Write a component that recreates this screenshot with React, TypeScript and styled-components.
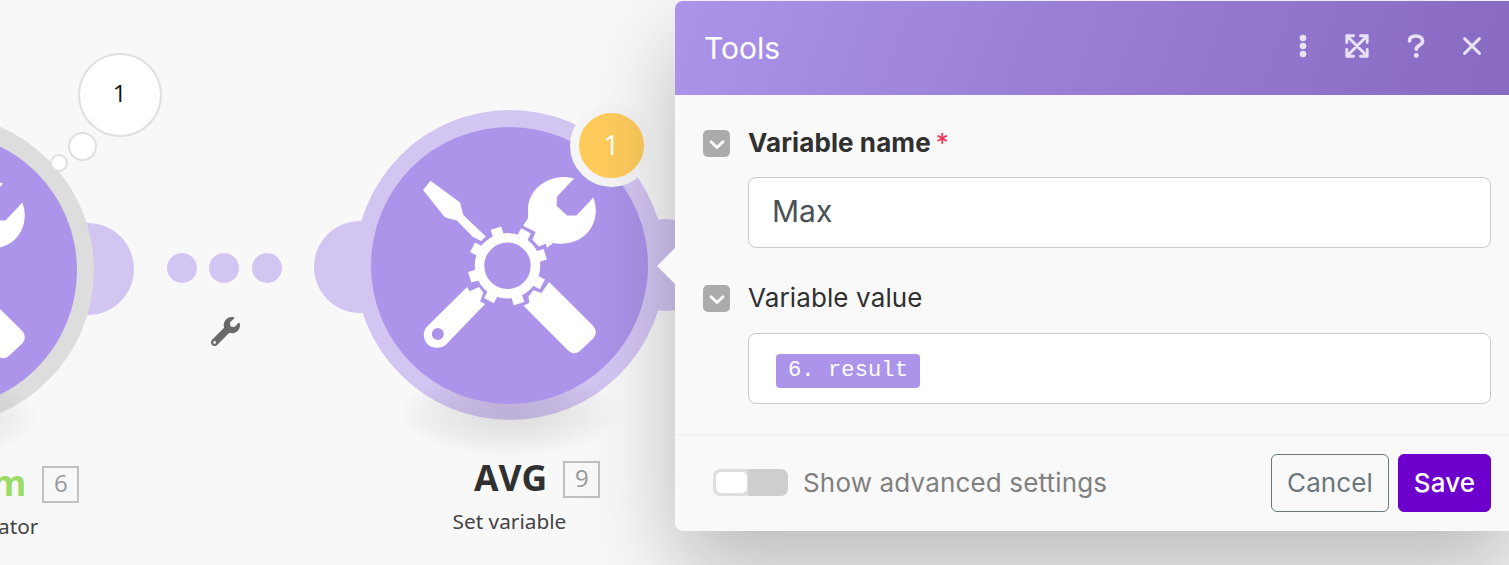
import React from "react";
import styled, { createGlobalStyle } from "styled-components";
import { FaWrench } from "react-icons/fa";

const GlobalStyle = createGlobalStyle`
  * { box-sizing: border-box; }
  body { margin: 0; background: #f8f8f8; overflow: hidden; }
  button, input { font: inherit; }
`;

const Canvas = styled.main`
  position: relative;
  width: 1509px;
  height: 565px;
  overflow: hidden;
  background: #f8f8f8;
  font-family: "Noto Sans", "Open Sans", sans-serif;
`;

type Spot = { $x: number; $y: number };

const Disc = styled.div<Spot & { $r: number; $fill: string; $line?: string }>`
  position: absolute;
  left: ${(p) => p.$x - p.$r}px;
  top: ${(p) => p.$y - p.$r}px;
  width: ${(p) => p.$r * 2}px;
  height: ${(p) => p.$r * 2}px;
  display: flex;
  align-items: center;
  justify-content: center;
  border-radius: 50%;
  background: ${(p) => p.$fill};
  border: ${(p) => p.$line ?? "none"};
`;

const GroundShadow = styled.div<Spot>`
  position: absolute;
  left: ${(p) => p.$x - 112}px;
  top: ${(p) => p.$y - 44}px;
  width: 224px;
  height: 88px;
  background: radial-gradient(closest-side, rgba(0, 0, 0, 0.11), rgba(0, 0, 0, 0.08) 40%, rgba(0, 0, 0, 0.03) 80%, rgba(0, 0, 0, 0));
`;

const BubbleText = styled.span`
  font-family: "Open Sans", sans-serif;
  font-size: 24px;
  line-height: 30px;
  color: #111;
  padding-bottom: 4px;
`;

const BadgeText = styled(BubbleText)`
  font-size: 28px;
  color: #fff;
  padding: 0 0 4px 1px;
`;

const LinkWrench = styled(FaWrench)`
  position: absolute;
  left: 211px;
  top: 317px;
  width: 29px;
  height: 29px;
  color: #6a6a6a;
`;

const Caption = styled.div<Spot>`
  position: absolute;
  left: ${(p) => p.$x}px;
  top: ${(p) => p.$y}px;
  width: max-content;
  display: flex;
  flex-direction: column;
  align-items: flex-end;
`;

const CaptionRow = styled.div`
  display: flex;
  align-items: center;
  gap: 16px;
  height: 38px;
`;

const CaptionTitle = styled.strong<{ $color: string }>`
  font: 700 35.5px/38px "Open Sans", sans-serif;
  color: ${(p) => p.$color};
  padding-bottom: 4px;
`;

const CaptionNumber = styled.span`
  width: 37px;
  height: 37px;
  border: 2px solid #c0c0c0;
  color: #999;
  font: 24px/29px "Open Sans", sans-serif;
  text-align: center;
`;

const CaptionSub = styled.span<{ $inset: number }>`
  margin: 9px ${(p) => p.$inset}px 0 0;
  font-size: 20.8px;
  line-height: 28px;
  color: #444;
`;

const Icon = styled.svg`
  display: block;
  flex: none;
`;

const Panel = styled.section`
  position: absolute;
  left: 675px;
  top: 1px;
  width: 844px;
  height: 530px;
  display: flex;
  flex-direction: column;
  border-radius: 8px;
  background: #f9f9f9;
  box-shadow: 0 40px 90px rgba(0, 0, 0, 0.25);
  font-family: Inter, sans-serif;
`;

const Pointer = styled.div`
  position: absolute;
  left: -18px;
  top: 247px;
  border: 18px solid transparent;
  border-left: 0;
  border-right-color: #f9f9f9;
`;

const Header = styled.header`
  display: flex;
  align-items: center;
  justify-content: space-between;
  height: 94px;
  padding: 0 21px 0 29px;
  border-radius: 8px 8px 0 0;
  background: linear-gradient(110deg, #ab94ea 0%, #9b80d8 42%, #8769c1 100%);
`;

const Title = styled.h1`
  margin: 0;
  font-size: 30px;
  font-weight: 400;
  line-height: 40px;
  color: #fff;
`;

const HeaderActions = styled.div`
  display: flex;
  align-items: center;
  padding-bottom: 4px;
`;

const HeaderButton = styled.button<{ $width: number }>`
  display: flex;
  align-items: center;
  justify-content: center;
  width: ${(p) => p.$width}px;
  height: 32px;
  padding: 0;
  border: 0;
  background: none;
  color: #e9e2f7;
`;

const Fields = styled.div`
  display: flex;
  flex-direction: column;
  height: 339px;
  padding: 30px 28px 0;
`;

const Field = styled.div`
  display: flex;
  flex-direction: column;
  height: 156px;
`;

const FieldHead = styled.div`
  display: flex;
  align-items: center;
  gap: 18px;
  height: 36px;
`;

const Toggle = styled.span<{ $drop: number }>`
  display: flex;
  align-items: center;
  justify-content: center;
  width: 27px;
  height: 27px;
  margin-top: ${(p) => p.$drop}px;
  border-radius: 5px;
  background: #ababab;
`;

const Label = styled.label<{ $bold?: boolean }>`
  font-size: 26px;
  line-height: 34px;
  font-weight: ${(p) => (p.$bold ? 650 : 400)};
  letter-spacing: ${(p) => (p.$bold ? 0.1 : 0.12)}px;
  color: #303030;
`;

const Star = styled.span`
  margin-left: 5px;
  font-weight: 400;
  color: #ee3356;
`;

const ValueBox = styled.div<{ $gap: number }>`
  display: flex;
  align-items: center;
  height: 71px;
  margin: ${(p) => p.$gap}px 0 0 45px;
  padding: 0 23px;
  border: 1px solid #c9c9cf;
  border-radius: 8px;
  background: #fff;
  font-size: 30px;
  color: #4a5055;
`;

const ValueText = styled.span`
  padding-bottom: 3px;
`;

const Chip = styled.span`
  display: flex;
  align-items: center;
  height: 34px;
  margin: 5px 0 0 4px;
  padding: 1px 12px 0;
  border-radius: 4px;
  background: #ab94ea;
  color: #fff;
  font: 400 22px/28px "Liberation Mono", monospace;
  letter-spacing: 0.13px;
`;

const Footer = styled.footer`
  display: flex;
  align-items: center;
  height: 97px;
  padding: 0 28px 0 38px;
  border-top: 1px solid #eeeeee;
`;

const Switch = styled.span`
  display: flex;
  align-items: center;
  width: 75px;
  height: 27px;
  margin-bottom: 2px;
  padding: 3px;
  border-radius: 7px;
  background: linear-gradient(90deg, #dedede 45%, #cecece 48%);
`;

const Knob = styled.span`
  width: 31px;
  height: 21px;
  border-radius: 5px;
  background: #fff;
`;

const SwitchLabel = styled.span`
  flex: 1;
  margin-left: 15px;
  padding-bottom: 2px;
  font-size: 26px;
  letter-spacing: 0.16px;
  color: #808080;
`;

const Action = styled.button<{ $primary?: boolean }>`
  width: ${(p) => (p.$primary ? 93 : 118)}px;
  height: 58px;
  margin-left: ${(p) => (p.$primary ? 9 : 0)}px;
  padding: 0 0 2px;
  border: 1px solid ${(p) => (p.$primary ? "#6d00cc" : "#6b777d")};
  border-radius: 6px;
  background: ${(p) => (p.$primary ? "#6d00cc" : "transparent")};
  color: ${(p) => (p.$primary ? "#fff" : "#6b777d")};
  font-size: 26px;
  font-weight: ${(p) => (p.$primary ? 500 : 400)};
  letter-spacing: 0.1px;
`;

const TEETH = [-107, -62, -17, 28, 73, 118, 163, 208];

/* Screwdriver crossed with a wrench behind a cog. */
function ToolsIcon() {
  return (
    <Icon width="180" height="186" viewBox="420.2 172.2 180 186" fill="#fff">
      <path d="M430.7 181L423.3 190.3L444.3 216.7Q445.5 218 457 220.7L473 237L481.3 241.3L486 236.7L463.3 215L460.3 202.7Z" />
      <path d="M574.3 178.7C552 172 528 188 528.3 210L528.3 218.3L523.3 226L535.8 232.3L532.7 240L539 246.7L546 244L547.3 248L553.3 243.3C579 247 596 232 596 210Q596 204 593.6 197.6L576.7 215.7L567.3 215.7L556.7 206L557.3 196.7Z" />
      <path d="M467.3 287.3L470 291.5L479.3 287.3L483.5 293L480.3 301.7L485.3 304.3L446 345Q443 348 437 348C429 348 424 342 424 335Q424 330 427.3 326.7ZM438 328.3a6 6 0 1 0 .01 0Z" fillRule="evenodd" />
      <path d="M549.3 282.3L541.7 293.3L533.5 290.5L528.7 296.7L529.5 303L523.7 306L568.3 350.7Q574.3 356 580 351.3L593.7 338.5Q598.5 332.5 593.5 326.3Z" />
      {TEETH.map((a) => (
        <rect key={a} x="537" y="260.5" width="10.2" height="11" transform={`rotate(${a} 507.7 266)`} />
      ))}
      <circle cx="507.7" cy="266" r="28" fill="none" stroke="#fff" strokeWidth="9.6" />
    </Icon>
  );
}

function ChevronToggle({ drop = 0 }: { drop?: number }) {
  return (
    <Toggle $drop={drop}>
      <Icon width="27" height="27" viewBox="0 0 27 27" fill="none" stroke="#fff" strokeWidth="2.8" strokeLinecap="round" strokeLinejoin="round">
        <path d="M8 11.7l6 5.8 6-5.8" />
      </Icon>
    </Toggle>
  );
}

export default function App() {
  return (
    <>
      <GlobalStyle />
      <Canvas>
        <Disc $x={88} $y={269} $r={46} $fill="#d3c5f2" />
        <Disc $x={-62} $y={270} $r={156} $fill="#dddddd" />
        <GroundShadow $x={-72} $y={417} />
        <Disc $x={-61.5} $y={270} $r={138.5} $fill="#ab94ea">
          <ToolsIcon />
        </Disc>
        <Disc $x={59} $y={163} $r={9} $fill="#fff" $line="2px solid #dfdfdf" />
        <Disc $x={82.5} $y={146.7} $r={14.5} $fill="#fff" $line="2px solid #dfdfdf" />
        <Disc $x={119.7} $y={95} $r={42} $fill="#fff" $line="2px solid #dfdfdf">
          <BubbleText>1</BubbleText>
        </Disc>

        <Disc $x={181.7} $y={268} $r={15} $fill="#d3c5f2" />
        <Disc $x={224.3} $y={268} $r={15} $fill="#d3c5f2" />
        <Disc $x={266.7} $y={267.5} $r={15} $fill="#d3c5f2" />
        <LinkWrench />

        <Disc $x={360} $y={266.7} $r={46} $fill="#d3c5f2" />
        <Disc $x={666} $y={265.3} $r={46} $fill="#d3c5f2" />
        <Disc $x={509.5} $y={265.2} $r={155} $fill="#d3c5f2" />
        <GroundShadow $x={510} $y={413} />
        <Disc $x={509.5} $y={265.2} $r={138.5} $fill="#ab94ea">
          <ToolsIcon />
        </Disc>
        <Disc $x={611} $y={145.5} $r={41.5} $fill="#ffcc5c" $line="9px solid #f5f5f5">
          <BadgeText>1</BadgeText>
        </Disc>

        <Caption $x={-8.5} $y={465}>
          <CaptionRow>
            <CaptionTitle $color="#9bdb66">m</CaptionTitle>
            <CaptionNumber>6</CaptionNumber>
          </CaptionRow>
          <CaptionSub $inset={41}>ator</CaptionSub>
        </Caption>
        <Caption $x={452.5} $y={460}>
          <CaptionRow>
            <CaptionTitle $color="#303030">AVG</CaptionTitle>
            <CaptionNumber>9</CaptionNumber>
          </CaptionRow>
          <CaptionSub $inset={34}>Set variable</CaptionSub>
        </Caption>

        <Panel>
          <Pointer />
          <Header>
            <Title>Tools</Title>
            <HeaderActions>
              <HeaderButton $width={50} aria-label="More">
                <Icon width="8" height="24" viewBox="0 0 8 24" fill="currentColor">
                  <circle cx="4" cy="4" r="3.3" />
                  <circle cx="4" cy="12" r="3.3" />
                  <circle cx="4" cy="20" r="3.3" />
                </Icon>
              </HeaderButton>
              <HeaderButton $width={58} aria-label="Expand">
                <Icon width="24" height="24" viewBox="0 0 24 24" fill="none" stroke="currentColor" strokeWidth="2.9" strokeLinecap="round" strokeLinejoin="round">
                  <path d="M1.8 8.5V1.8H8.5M15.5 1.8H22.2V8.5M22.2 15.5V22.2H15.5M8.5 22.2H1.8V15.5M2 2L22 22M22 2L2 22" />
                </Icon>
              </HeaderButton>
              <HeaderButton $width={60} aria-label="Help">
                <Icon width="18" height="24" viewBox="0 0 18 24" fill="none" stroke="currentColor" strokeWidth="3.6" strokeLinecap="round" strokeLinejoin="round">
                  <path d="M2.5 7C2.5 3.8 5 2 9 2C13 2 15.6 4 15.6 7.2C15.6 11.5 9.3 11 9.3 15.3" />
                  <circle cx="9.3" cy="21.5" r="2.4" fill="currentColor" stroke="none" />
                </Icon>
              </HeaderButton>
              <HeaderButton $width={52} aria-label="Close">
                <Icon width="18" height="18" viewBox="0 0 18 18" fill="none" stroke="currentColor" strokeWidth="2.9" strokeLinecap="round">
                  <path d="M1.6 1.6L16.4 16.4M16.4 1.6L1.6 16.4" />
                </Icon>
              </HeaderButton>
            </HeaderActions>
          </Header>
          <Fields>
            <Field>
              <FieldHead>
                <ChevronToggle />
                <Label $bold>
                  Variable name<Star>*</Star>
                </Label>
              </FieldHead>
              <ValueBox $gap={16}>
                <ValueText>Max</ValueText>
              </ValueBox>
            </Field>
            <Field>
              <FieldHead>
                <ChevronToggle drop={2} />
                <Label>Variable value</Label>
              </FieldHead>
              <ValueBox $gap={17}>
                <Chip>6. result</Chip>
              </ValueBox>
            </Field>
          </Fields>
          <Footer>
            <Switch>
              <Knob />
            </Switch>
            <SwitchLabel>Show advanced settings</SwitchLabel>
            <Action>Cancel</Action>
            <Action $primary>Save</Action>
          </Footer>
        </Panel>
      </Canvas>
    </>
  );
}
